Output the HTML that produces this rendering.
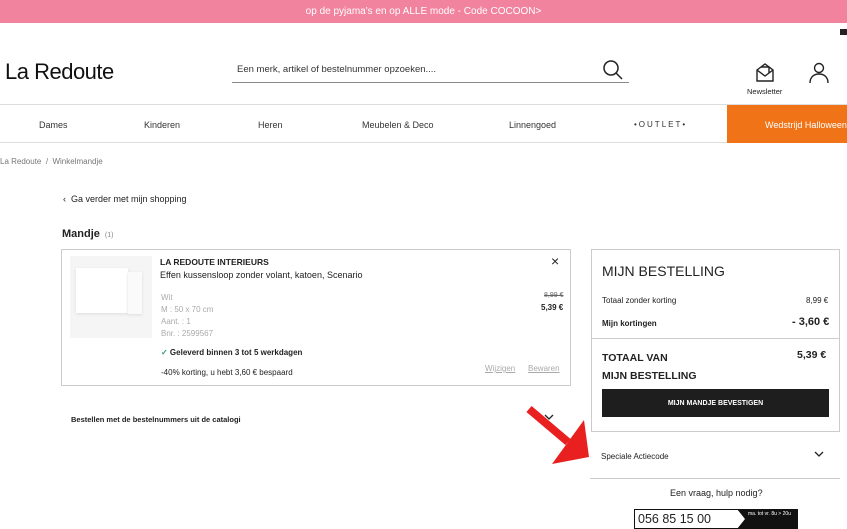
<!DOCTYPE html>
<html><head><meta charset="utf-8"><style>
*{margin:0;padding:0;box-sizing:border-box}
body{width:847px;height:525px;overflow:hidden;background:#fff;font-family:"Liberation Sans",sans-serif;color:#222;position:relative}
.a{position:absolute}
.banner{left:0;top:0;width:847px;height:23px;background:#f2839f;color:#fff;font-size:10px;text-align:center;line-height:24px}
.nav{left:0;top:104px;width:847px;height:39px;border-top:1px solid #ddd;border-bottom:1px solid #ddd}
.nav span{position:absolute;top:15px;font-size:9px;color:#333}
.box{border:1px solid #ccc}
.s{font-size:8px}
</style></head><body>
<div class="a banner">op de pyjama's en op ALLE mode - Code COCOON&gt;</div>
<div class="a" style="left:840px;top:29px;width:7px;height:6px;background:#222"></div>
<div class="a" style="left:5px;top:59px;font-size:22px;color:#111;letter-spacing:-0.5px">La Redoute</div>
<div class="a" style="left:237px;top:64px;font-size:9.5px;color:#333">Een merk, artikel of bestelnummer opzoeken....</div>
<div class="a" style="left:232px;top:82px;width:397px;height:1px;background:#888"></div>
<svg class="a" style="left:602px;top:59px" width="22" height="22" viewBox="0 0 22 22"><circle cx="9" cy="9" r="7" fill="none" stroke="#222" stroke-width="1.5"/><path d="M14 14l6 6" stroke="#222" stroke-width="1.5"/></svg>
<svg class="a" style="left:755px;top:62px" width="20" height="22" viewBox="0 0 20 22"><path d="M2 8l8-6 8 6v11H2z M2 8l8 6 8-6 M6 5h8v6" fill="none" stroke="#222" stroke-width="1.4"/></svg>
<div class="a" style="left:747px;top:87px;font-size:7.5px">Newsletter</div>
<svg class="a" style="left:808px;top:62px" width="22" height="22" viewBox="0 0 22 22"><circle cx="11" cy="6" r="4.5" fill="none" stroke="#222" stroke-width="1.4"/><path d="M2 21c0-6 4-9 9-9s9 3 9 9" fill="none" stroke="#222" stroke-width="1.4"/></svg>
<div class="a nav"><span style="left:39px">Dames</span><span style="left:144px">Kinderen</span><span style="left:258px">Heren</span><span style="left:362px">Meubelen &amp; Deco</span><span style="left:509px">Linnengoed</span><span style="left:634px;letter-spacing:2px;font-size:8px">•OUTLET•</span>
<div class="a" style="left:727px;top:0;width:120px;height:38px;background:#f07317;color:#fff;font-size:9px;padding:15px 0 0 38px;white-space:nowrap">Wedstrijd Halloween</div></div>
<div class="a s" style="left:0;top:157px;color:#777">La Redoute &nbsp;/ &nbsp;Winkelmandje</div>
<div class="a" style="left:63px;top:194px;font-size:9px">‹ &nbsp;Ga verder met mijn shopping</div>
<div class="a" style="left:62px;top:228px;font-size:11px;font-weight:bold">Mandje <span style="font-size:7px;color:#888;font-weight:normal">&nbsp;(1)</span></div>
<div class="a box" style="left:61px;top:249px;width:510px;height:137px"></div>
<div class="a" style="left:70px;top:256px;width:82px;height:82px;background:#f5f5f5"><div class="a" style="left:6px;top:12px;width:52px;height:45px;background:#fff;box-shadow:0 1px 3px #ddd"></div><div class="a" style="left:58px;top:16px;width:14px;height:42px;background:#fafafa;box-shadow:0 1px 3px #ddd"></div></div>
<div class="a" style="left:160px;top:257px;font-size:8.5px;font-weight:bold">LA REDOUTE INTERIEURS</div>
<div class="a" style="left:160px;top:270px;font-size:9px">Effen kussensloop zonder volant, katoen, Scenario</div>
<div class="a s" style="left:161px;top:292px;color:#aaa;line-height:12px">Wit<br>M : 50 x 70 cm<br>Aant. : 1<br>Bnr. : 2599567</div>
<div class="a s" style="left:544px;top:292px;color:#666;text-decoration:line-through;font-size:7px">8,99 €</div>
<div class="a s" style="left:541px;top:303px;font-weight:bold">5,39 €</div>
<div class="a" style="left:551px;top:253px;font-size:14px">×</div>
<div class="a s" style="left:161px;top:348px;font-weight:bold"><span style="color:#2a9a7a">✓</span> Geleverd binnen 3 tot 5 werkdagen</div>
<div class="a s" style="left:161px;top:368px">-40% korting, u hebt 3,60 € bespaard</div>
<div class="a s" style="left:485px;top:364px;color:#aaa;text-decoration:underline">Wijzigen</div>
<div class="a s" style="left:528px;top:364px;color:#aaa;text-decoration:underline">Bewaren</div>
<div class="a" style="left:71px;top:415px;font-size:7.5px;font-weight:bold">Bestellen met de bestelnummers uit de catalogi</div>
<svg class="a" style="left:544px;top:414px" width="10" height="6" viewBox="0 0 10 6"><path d="M1 1l4 4 4-4" fill="none" stroke="#222" stroke-width="1.3"/></svg>
<div class="a box" style="left:591px;top:249px;width:249px;height:183px"></div>
<div class="a" style="left:602px;top:263px;font-size:14px">MIJN BESTELLING</div>
<div class="a s" style="left:602px;top:296px">Totaal zonder korting</div>
<div class="a s" style="left:806px;top:296px">8,99 €</div>
<div class="a s" style="left:602px;top:319px;font-weight:bold">Mijn kortingen</div>
<div class="a" style="left:792px;top:316px;font-size:11px;font-weight:bold">- 3,60 €</div>
<div class="a" style="left:591px;top:338px;width:249px;height:1px;background:#ccc"></div>
<div class="a" style="left:602px;top:349px;font-size:10.5px;font-weight:bold;line-height:18px">TOTAAL VAN<br>MIJN BESTELLING</div>
<div class="a" style="left:797px;top:349px;font-size:10.5px;font-weight:bold">5,39 €</div>
<div class="a" style="left:602px;top:389px;width:227px;height:28px;background:#1e1e1e;color:#fff;font-size:7px;font-weight:bold;text-align:center;line-height:29px">MIJN MANDJE BEVESTIGEN</div>
<div class="a s" style="left:601px;top:452px">Speciale Actiecode</div>
<svg class="a" style="left:814px;top:451px" width="10" height="6" viewBox="0 0 10 6"><path d="M1 1l4 4 4-4" fill="none" stroke="#222" stroke-width="1.3"/></svg>
<div class="a" style="left:590px;top:478px;width:250px;height:1px;background:#ccc"></div>
<div class="a" style="left:670px;top:488px;font-size:9px">Een vraag, hulp nodig?</div>
<div class="a" style="left:634px;top:509px;width:164px;height:20px;border:1.5px solid #111;background:#fff"></div>
<div class="a" style="left:638px;top:512px;font-size:12.5px">056 85 15 00</div>
<div class="a" style="left:737px;top:509px;width:61px;height:20px;background:#111;clip-path:polygon(0 0,100% 0,100% 100%,0 100%,8px 50%)"></div>
<div class="a" style="left:748px;top:511px;font-size:5px;color:#fff">ma. tot vr. 8u &gt; 20u</div>
<svg class="a" style="left:520px;top:402px" width="80" height="70" viewBox="520 402 80 70"><path d="M529 409L568 442" stroke="#e8201f" stroke-width="8"/><polygon points="584,420 552,464 589,457" fill="#e8201f"/></svg>
</body></html>
